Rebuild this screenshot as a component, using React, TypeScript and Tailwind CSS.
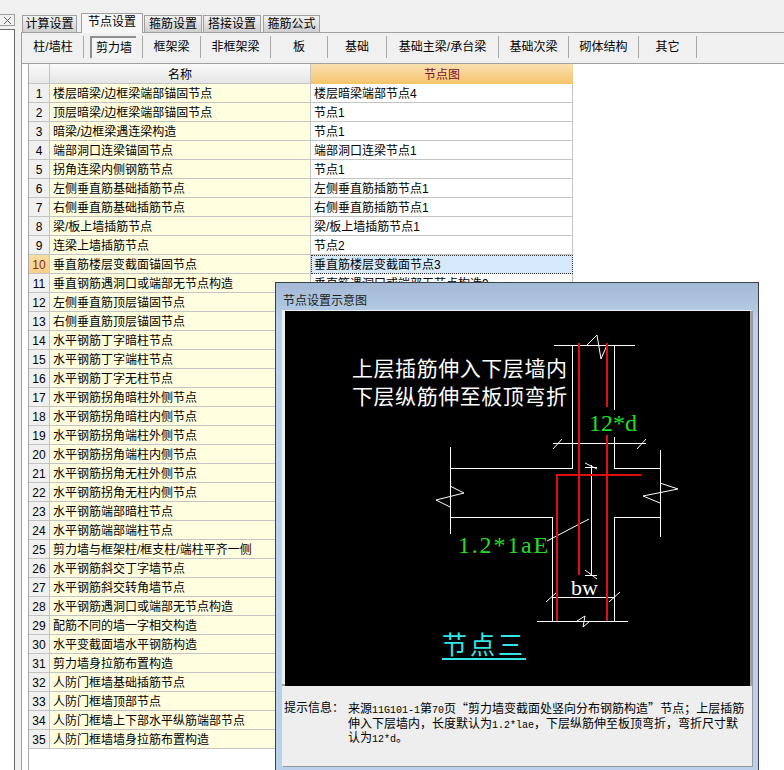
const FONT = { fontFamily: '"Liberation Sans","Noto Sans CJK SC",sans-serif' };

const rows: [string, string][] = [
  ["楼层暗梁/边框梁端部锚固节点", "楼层暗梁端部节点4"],
  ["顶层暗梁/边框梁端部锚固节点", "节点1"],
  ["暗梁/边框梁遇连梁构造", "节点1"],
  ["端部洞口连梁锚固节点", "端部洞口连梁节点1"],
  ["拐角连梁内侧钢筋节点", "节点1"],
  ["左侧垂直筋基础插筋节点", "左侧垂直筋插筋节点1"],
  ["右侧垂直筋基础插筋节点", "右侧垂直筋插筋节点1"],
  ["梁/板上墙插筋节点", "梁/板上墙插筋节点1"],
  ["连梁上墙插筋节点", "节点2"],
  ["垂直筋楼层变截面锚固节点", "垂直筋楼层变截面节点3"],
  ["垂直钢筋遇洞口或端部无节点构造", "垂直筋遇洞口或端部无节点构造9"],
  ["左侧垂直筋顶层锚固节点", ""],
  ["右侧垂直筋顶层锚固节点", ""],
  ["水平钢筋丁字暗柱节点", ""],
  ["水平钢筋丁字端柱节点", ""],
  ["水平钢筋丁字无柱节点", ""],
  ["水平钢筋拐角暗柱外侧节点", ""],
  ["水平钢筋拐角暗柱内侧节点", ""],
  ["水平钢筋拐角端柱外侧节点", ""],
  ["水平钢筋拐角端柱内侧节点", ""],
  ["水平钢筋拐角无柱外侧节点", ""],
  ["水平钢筋拐角无柱内侧节点", ""],
  ["水平钢筋端部暗柱节点", ""],
  ["水平钢筋端部端柱节点", ""],
  ["剪力墙与框架柱/框支柱/端柱平齐一侧", ""],
  ["水平钢筋斜交丁字墙节点", ""],
  ["水平钢筋斜交转角墙节点", ""],
  ["水平钢筋遇洞口或端部无节点构造", ""],
  ["配筋不同的墙一字相交构造", ""],
  ["水平变截面墙水平钢筋构造", ""],
  ["剪力墙身拉筋布置构造", ""],
  ["人防门框墙基础插筋节点", ""],
  ["人防门框墙顶部节点", ""],
  ["人防门框墙上下部水平纵筋端部节点", ""],
  ["人防门框墙墙身拉筋布置构造", ""],
];

const subTabs: [string, string][] = [
  ["柱/墙柱", "w-[61px]"],
  ["剪力墙", "w-[59px]"],
  ["框架梁", "w-[58px]"],
  ["非框架梁", "w-[70px]"],
  ["板", "w-[57px]"],
  ["基础", "w-[59px]"],
  ["基础主梁/承台梁", "w-[112px]"],
  ["基础次梁", "w-[70px]"],
  ["砌体结构", "w-[70px]"],
  ["其它", "w-[58px]"],
];

function Tab({ label, active, cls }: { label: string; active?: boolean; cls: string }) {
  return active ? (
    <div className={`${cls} relative z-10 flex h-[20px] items-center justify-center border border-b-0 border-[#a0a0a0] bg-[#f7f7f7] pb-[3px] text-[12px] text-black`}>
      {label}
    </div>
  ) : (
    <div className={`${cls} flex h-[17px] items-center justify-center border border-b-0 border-[#a0a0a0] bg-gradient-to-b from-[#f2f2f2] to-[#cfcfcf] text-[12px] text-black`}>
      {label}
    </div>
  );
}

function Latin({ children }: { children: string }) {
  return <span className="font-['Liberation_Mono'] text-[10px]">{children}</span>;
}

function Cjk({ children }: { children: string }) {
  return <span className="font-['Noto_Sans_CJK_SC']">{children}</span>;
}

function Diagram() {
  const w = "#ffffff";
  const r = "#e01010";
  return (
    <svg width="465" height="375" viewBox="285 311 465 375" className="block">
      <rect x="285" y="311" width="465" height="375" fill="#000" />
      <g stroke={w} strokeWidth="1" fill="none" shapeRendering="crispEdges">
        <path d="M554 345.5H635M572.5 345V468.5M614.5 345V410M614.5 437V468.5" />
        <path d="M553 443.5H646" />
        <path d="M450.5 447V534M450 468.5H572M614 468.5H660M660.5 450V537" />
        <path d="M450 517.5H552M614 517.5H660M552.5 517V621M614.5 517V621M537 621.5H628" />
        <path d="M552 597.5H614M591.5 465V575M585 467.5H597M585 575.5H597" />
      </g>
      <g stroke={w} strokeWidth="1" fill="none">
        <path d="M553 449L562 439M637 449L646 439" />
        <path d="M450 486L464 493L436 500L450 507" />
        <path d="M660 483L678 489L643 496L660 503" />
        <path d="M587 345L597 335L601 359L607 345" />
        <path d="M577 621L585 616L583 627L590 621" />
        <path d="M585 463L597 469M585 570L597 579" />
        <path d="M546 602L557 592M609 602L620 592" />
        <path d="M589 519L547 541" />
      </g>
      <g stroke={r} strokeWidth="2" fill="none" shapeRendering="crispEdges">
        <path d="M579 343V575" />
        <path d="M607 343V407M607 435V621" />
        <path d="M557 621V475H641" />
      </g>
      <g fontFamily='"Noto Sans CJK SC",sans-serif' fill="#fff" fontSize="21" letterSpacing="0.55">
        <text x="352" y="376">上层插筋伸入下层墙内</text>
        <text x="352" y="404">下层纵筋伸至板顶弯折</text>
      </g>
      <g fontFamily='"Liberation Serif",serif' fill="#22dd22" fontSize="24">
        <text x="589" y="431">12*d</text>
        <text x="458" y="553" letterSpacing="1.8">1.2*1aE</text>
      </g>
      <text x="571" y="595" fontFamily='"Liberation Serif",serif' fill="#fff" fontSize="22">bw</text>
      <text x="442" y="654" fontFamily='"Noto Sans CJK SC",sans-serif' fill="#33e6e6" fontSize="25" letterSpacing="3">节点三</text>
      <rect x="442" y="658" width="84" height="2" fill="#33e6e6" />
    </svg>
  );
}

export default function App() {
  return (
    <div className="relative flex h-[770px] w-[784px] overflow-hidden bg-[#f0f0f0] text-[12px] leading-none text-black" style={FONT}>
      {/* left sliver */}
      <div className="flex w-[21px] shrink-0 flex-col">
        <div className="mt-[14px] flex h-[12px] w-[15px] items-center justify-center border-y border-r border-[#a0a0a0] text-[#555]">
          <svg width="9" height="9" viewBox="0 0 9 9"><path d="M1 1L8 8M8 1L1 8" stroke="#606060" fill="none" /></svg>
        </div>
        <div className="mt-[3px] w-[15px] flex-1 border-t border-r border-[#6b6b6b] bg-white" />
      </div>

      {/* main */}
      <div className="flex min-w-0 flex-1 flex-col">
        <div className="flex h-[32px] items-end pl-[1px]">
          <Tab label="计算设置" cls="w-[55px] mr-[4px]" />
          <Tab label="节点设置" active cls="w-[62px] mb-[-1px] mr-[1px]" />
          <Tab label="箍筋设置" cls="w-[58px] mr-[1px]" />
          <Tab label="搭接设置" cls="w-[58px] mr-[2px]" />
          <Tab label="箍筋公式" cls="w-[57px]" />
        </div>
        <div className="flex flex-1 flex-col border-t border-l border-[#a0a0a0]">
          <div className="flex h-[31px] shrink-0 items-start border-b border-[#a0a0a0] pt-[3px] pl-[1px]">
            {subTabs.map(([label, w], i) => (
              <div key={label} className={`${w} flex h-[22px] items-center border-r border-[#a8a8a8]`}>
                {i === 1 ? (
                  <div className="ml-[6px] flex h-[22px] w-[46px] items-center justify-center border-t-2 border-l-2 border-[#8f8f8f] bg-[#f4f4f4]">
                    {label}
                  </div>
                ) : (
                  <div className="w-full text-center">{label}</div>
                )}
              </div>
            ))}
          </div>
          <div className="flex-1 bg-white pl-[6px]">
            <div className="h-full w-[546px] border-l border-[#a8a8a8]">
              <div className="flex h-[20px]">
                <div className="w-[21px] border-r border-b border-[#c4c4c4] bg-gradient-to-b from-[#fafafa] to-[#e8e8e8]" />
                <div className="flex w-[261px] items-center justify-center border-r border-b border-[#c4c4c4] bg-gradient-to-b from-[#fafafa] to-[#e6e6e6] pt-[2px]">
                  名称
                </div>
                <div className="flex w-[262px] items-center justify-center bg-gradient-to-b from-[#f8e0b0] to-[#f5c468] pt-[2px] text-[#7a1030]">
                  节点图
                </div>
              </div>
              {rows.map(([name, node], i) => (
                <div key={i} className="flex h-[19px]">
                  <div className={`flex w-[21px] items-center justify-center border-r border-b border-[#c4c4c4] pt-[2px] ${i === 9 ? "bg-gradient-to-b from-[#fbdca0] to-[#f8cf88] text-[#8a2a10]" : "bg-[#f0f0f0]"}`}>
                    {i + 1}
                  </div>
                  <div className="flex w-[261px] items-center border-r border-b border-[#c4c4c4] bg-[#ffffe0] pt-[2px] pl-[3px] whitespace-nowrap">
                    {name}
                  </div>
                  {i === 9 ? (
                    <div className="flex w-[262px] items-center border border-dotted border-[#303030] bg-[#d6eafc] pt-[1px] pl-[2px] whitespace-nowrap">
                      {node}
                    </div>
                  ) : (
                    <div className="flex w-[262px] items-center border-r border-b border-[#c4c4c4] pt-[2px] pl-[3px] whitespace-nowrap">
                      {node}
                    </div>
                  )}
                </div>
              ))}
            </div>
          </div>
        </div>
      </div>

      {/* dialog */}
      <div className="absolute top-[282px] left-[275px] flex h-[488px] w-[484px] flex-col border-t border-x border-[#3a3f45] bg-gradient-to-b from-[#a3b9d6] from-0% to-[#b9d1ea] to-[8%]">
        <div className="flex h-[27px] shrink-0 items-center pt-[8px] pl-[7px] text-[#1a1a1a]">节点设置示意图</div>
        <div className="mx-[6px] flex h-[456px] flex-col bg-[#eeeeee] shadow-[1px_1px_0_#9a9a9a]">
          <div className="mt-[1px] h-[375px] border-r-2 border-b-2 border-[#a0a0a0] pl-[3px]">
            <Diagram />
          </div>
          <div className="flex flex-1 pt-[16px] pl-[2px] text-[12px] leading-[12.5px]">
            <div className="w-[64px] shrink-0">提示信息：</div>
            <div className="whitespace-nowrap">
              <div>来源<Latin>11G101-1</Latin>第<Latin>70</Latin>页<Cjk>“</Cjk>剪力墙变截面处竖向分布钢筋构造<Cjk>”</Cjk>节点；上层插筋</div>
              <div>伸入下层墙内，长度默认为<Latin>1.2*lae</Latin>，下层纵筋伸至板顶弯折，弯折尺寸默</div>
              <div>认为<Latin>12*d</Latin>。</div>
            </div>
          </div>
        </div>
      </div>
    </div>
  );
}
